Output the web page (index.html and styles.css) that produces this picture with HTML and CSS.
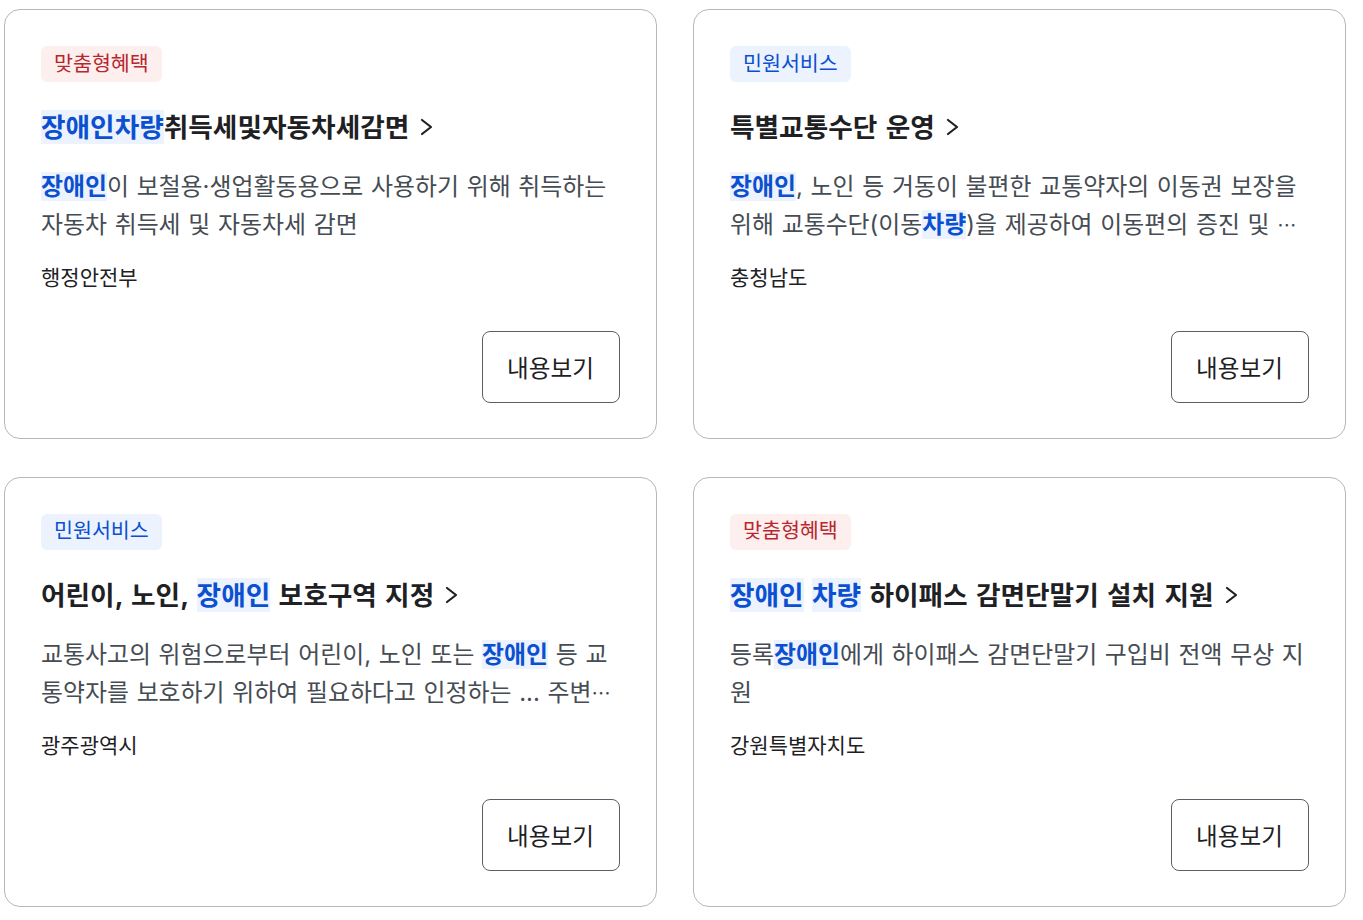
FILE: index.html
```html
<!DOCTYPE html>
<html lang="ko">
<head>
<meta charset="utf-8">
<title>서비스 목록</title>
<link rel="stylesheet" href="styles.css">
</head>
<body>
<div class="grid">
  <div class="card">
    <span class="tag tag-red">맞춤형혜택</span>
    <a class="title" href="#"><span class="title-text"><mark>장애인차량</mark>취득세및자동차세감면</span><svg class="chev" viewBox="0 0 14 18" width="14" height="18"><path d="M2 2 L11 9 L2 16" fill="none" stroke="#1e2124" stroke-width="2.2" stroke-linecap="round" stroke-linejoin="round"/></svg></a>
    <p class="desc"><mark>장애인</mark>이 보철용·생업활동용으로 사용하기 위해 취득하는 자동차 취득세 및 자동차세 감면</p>
    <p class="org">행정안전부</p>
    <button class="btn" type="button">내용보기</button>
  </div>
  <div class="card">
    <span class="tag tag-blue">민원서비스</span>
    <a class="title" href="#"><span class="title-text">특별교통수단 운영</span><svg class="chev" viewBox="0 0 14 18" width="14" height="18"><path d="M2 2 L11 9 L2 16" fill="none" stroke="#1e2124" stroke-width="2.2" stroke-linecap="round" stroke-linejoin="round"/></svg></a>
    <p class="desc"><mark>장애인</mark>, 노인 등 거동이 불편한 교통약자의 이동권 보장을 위해 교통수단(이동<mark>차량</mark>)을 제공하여 이동편의 증진 및 <span class="ell">⋯</span></p>
    <p class="org">충청남도</p>
    <button class="btn" type="button">내용보기</button>
  </div>
  <div class="card">
    <span class="tag tag-blue">민원서비스</span>
    <a class="title" href="#"><span class="title-text">어린이, 노인, <mark>장애인</mark> 보호구역 지정</span><svg class="chev" viewBox="0 0 14 18" width="14" height="18"><path d="M2 2 L11 9 L2 16" fill="none" stroke="#1e2124" stroke-width="2.2" stroke-linecap="round" stroke-linejoin="round"/></svg></a>
    <p class="desc">교통사고의 위험으로부터 어린이, 노인 또는 <mark>장애인</mark> 등 교통약자를 보호하기 위하여 필요하다고 인정하는 ... 주변<span class="ell">⋯</span></p>
    <p class="org">광주광역시</p>
    <button class="btn" type="button">내용보기</button>
  </div>
  <div class="card">
    <span class="tag tag-red">맞춤형혜택</span>
    <a class="title" href="#"><span class="title-text"><mark>장애인</mark> <mark>차량</mark> 하이패스 감면단말기 설치 지원</span><svg class="chev" viewBox="0 0 14 18" width="14" height="18"><path d="M2 2 L11 9 L2 16" fill="none" stroke="#1e2124" stroke-width="2.2" stroke-linecap="round" stroke-linejoin="round"/></svg></a>
    <p class="desc">등록<mark>장애인</mark>에게 하이패스 감면단말기 구입비 전액 무상 지원</p>
    <p class="org">강원특별자치도</p>
    <button class="btn" type="button">내용보기</button>
  </div>
</div>
</body>
</html>
```
FILE: styles.css
```css
* { box-sizing: border-box; }
html, body { margin: 0; padding: 0; background: #ffffff; }
body {
  font-family: Inter, "Noto Sans CJK KR", sans-serif;
  color: #1e2124;
}
.grid {
  display: grid;
  grid-template-columns: 652.5px 652.5px;
  column-gap: 36.5px;
  row-gap: 37.5px;
  padding: 9px 0 0 4px;
}
.card {
  display: flex;
  flex-direction: column;
  align-items: flex-start;
  border: 1px solid #b1b8be;
  border-radius: 16px;
  padding: 36px 36px 35px 36px;
  background: #fff;
}
.tag {
  display: inline-flex;
  align-items: center;
  height: 36px;
  padding: 0 13px;
  border-radius: 6px;
  font-size: 20.6px;
  line-height: 1;
}
.tag-red { background: #fdefee; color: #b8262f; }
.tag-blue { background: #ecf2fe; color: #0b50d0; }
.title {
  display: flex;
  align-items: center;
  margin-top: 28px;
  height: 34px;
  font-size: 26.7px;
  font-weight: 700;
  word-spacing: 2px;
  color: #1e2124;
  text-decoration: none;
  line-height: 34px;
}
.chev { margin-left: 11px; flex: none; }
mark {
  background: #ecf2fe;
  color: #0b50d0;
  font-weight: 700;
}
.title mark { padding: 1px 0; }
.desc {
  margin: 24px 0 0;
  font-size: 23.9px;
  line-height: 38px;
  word-spacing: 1px;
  min-height: 76px;
  color: #464c53;
  width: 100%;
  display: -webkit-box;
  -webkit-box-orient: vertical;
  -webkit-line-clamp: 2;
  overflow: hidden;
}
.ell { font-family: "Noto Sans CJK KR", sans-serif; font-size: 0.8em; }
.org {
  margin: 20px 0 0;
  font-size: 21px;
  line-height: 28px;
  color: #1e2124;
}
.btn {
  align-self: flex-end;
  margin-top: 39px;
  height: 72px;
  width: 138px;
  border: 1px solid #58616a;
  border-radius: 8px;
  background: #fff;
  font-family: Inter, "Noto Sans CJK KR", sans-serif;
  font-size: 23.6px;
  color: #1e2124;
  padding: 0;
}
```
